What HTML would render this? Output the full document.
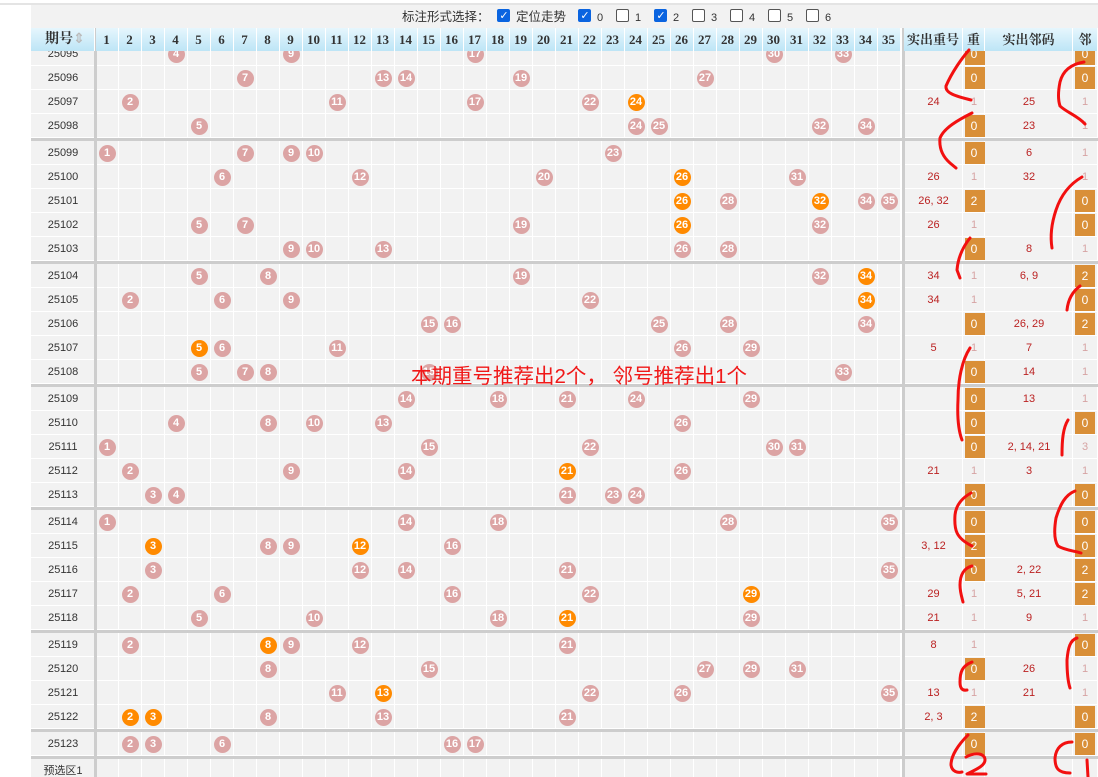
<!DOCTYPE html>
<html><head><meta charset="utf-8">
<style>
html,body{margin:0;padding:0;width:1098px;height:777px;overflow:hidden;background:#fff;font-family:"Liberation Sans","Noto Sans CJK SC",sans-serif;}
#w{position:absolute;left:0;top:0;width:1098px;height:777px;overflow:hidden}
.a{position:absolute;box-sizing:border-box}
.c{background:#f2f2f2;border-right:1px solid #fff;border-bottom:1px solid #fff}
.h{background:linear-gradient(#e6f6fd,#bde5f6);border-right:1px solid #fff;font:bold 13px "Liberation Serif","Noto Serif CJK SC",serif;color:#333;text-align:center;line-height:23px}
.b{width:17px;height:17px;border-radius:50%;background:#dca4a4;color:#fff;font:bold 11px "Liberation Sans",sans-serif;text-align:center;line-height:17px}
.b.o{background:#ff8a00}
.t{font:11px "Liberation Sans","Noto Sans CJK SC",sans-serif;text-align:center;line-height:24px}
.p{color:#333;font-size:12px}
.r{color:#b22}
.g{color:#d6a3a3}
.ob{background:#d98f38;color:#fff}
.cb{width:13px;height:13px;border-radius:2px}
.cb.on{background:#0a64e0}
.cb.off{border:1px solid #555;background:#fff}
</style></head><body><div id="w"></div>
<script>
var W=document.getElementById('w');
function d(cls,x,y,w,h,txt,st){var e=document.createElement('div');e.className='a '+cls;e.style.left=x+'px';e.style.top=y+'px';if(w!=null)e.style.width=w+'px';if(h!=null)e.style.height=h+'px';if(txt!=null)e.textContent=txt;if(st)e.style.cssText+=st;W.appendChild(e);return e;}
d('',0,3,1098,2,null,'background:#e4e4e4');
d('',31,5,1067,23,null,'background:#f2f2f2');
d('',402,9,90,16,'标注形式选择：','font-size:12.5px;color:#333;line-height:16px');
var cbx=[[497,1,'定位走势'],[578,1,'0'],[616,0,'1'],[654,1,'2'],[692,0,'3'],[730,0,'4'],[768,0,'5'],[806,0,'6']];
cbx.forEach(function(c){d('cb '+(c[1]?'on':'off'),c[0],9,13,13);var t=d('',c[0]+19,9,70,16,c[2],'font-size:'+(c[2].length>1?'12.5':'11')+'px;color:#333;line-height:18px');if(c[2].length>1)t.style.lineHeight='16px';});
cbx.forEach(function(c){if(c[1])d('',c[0]+2,9,10,13,'✓','color:#fff;font:bold 11px "DejaVu Sans",sans-serif;line-height:13px;text-align:center');});
var rows=[
['25095',54,[4,9,17,30,33],[],'',['0',1],'',['0',1]],
['25096',78,[7,13,14,19,27],[],'',['0',1],'',['0',1]],
['25097',102,[2,11,17,22,24],[24],'24',['1',0],'25',['1',0]],
['25098',126,[5,24,25,32,34],[],'',['0',1],'23',['1',0]],
['25099',153,[1,7,9,10,23],[],'',['0',1],'6',['1',0]],
['25100',177,[6,12,20,26,31],[26],'26',['1',0],'32',['1',0]],
['25101',201,[26,28,32,34,35],[26,32],'26,32',['2',1],'',['0',1]],
['25102',225,[5,7,19,26,32],[26],'26',['1',0],'',['0',1]],
['25103',249,[9,10,13,26,28],[],'',['0',1],'8',['1',0]],
['25104',276,[5,8,19,32,34],[34],'34',['1',0],'6,9',['2',1]],
['25105',300,[2,6,9,22,34],[34],'34',['1',0],'',['0',1]],
['25106',324,[15,16,25,28,34],[],'',['0',1],'26,29',['2',1]],
['25107',348,[5,6,11,26,29],[5],'5',['1',0],'7',['1',0]],
['25108',372,[5,7,8,15,33],[],'',['0',1],'14',['1',0]],
['25109',399,[14,18,21,24,29],[],'',['0',1],'13',['1',0]],
['25110',423,[4,8,10,13,26],[],'',['0',1],'',['0',1]],
['25111',447,[1,15,22,30,31],[],'',['0',1],'2,14,21',['3',0]],
['25112',471,[2,9,14,21,26],[21],'21',['1',0],'3',['1',0]],
['25113',495,[3,4,21,23,24],[],'',['0',1],'',['0',1]],
['25114',522,[1,14,18,28,35],[],'',['0',1],'',['0',1]],
['25115',546,[3,8,9,12,16],[3,12],'3,12',['2',1],'',['0',1]],
['25116',570,[3,12,14,21,35],[],'',['0',1],'2,22',['2',1]],
['25117',594,[2,6,16,22,29],[29],'29',['1',0],'5,21',['2',1]],
['25118',618,[5,10,18,21,29],[21],'21',['1',0],'9',['1',0]],
['25119',645,[2,8,9,12,21],[8],'8',['1',0],'',['0',1]],
['25120',669,[8,15,27,29,31],[],'',['0',1],'26',['1',0]],
['25121',693,[11,13,22,26,35],[13],'13',['1',0],'21',['1',0]],
['25122',717,[2,3,8,13,21],[2,3],'2,3',['2',1],'',['0',1]],
['25123',744,[2,3,6,16,17],[],'',['0',1],'',['0',1]],
['预选区1',771,[],[],'',null,'',null]
];
function cx(i){return 107+23*(i-1);}
var prev=null;
rows.forEach(function(r){
  var y=r[1]-12;
  d('c',31,y,64,24);
  for(var i=1;i<=35;i++)d('c',cx(i)-11.5,y,23,24);
  d('c',904,y,59,24);d('c',963,y,22,24);d('c',985,y,88,24);d('c',1073,y,25,24);
  d('t p',31,y,64,24,r[0],'font-size:'+(r[0].length>5?'12':'11')+'px');
  r[2].forEach(function(n){d('b'+(r[3].indexOf(n)>=0?' o':''),cx(n)-8.5,r[1]-8.5,17,17,String(n));});
  if(r[4])d('t r',904,y,59,24,r[4].replace(/,/g,', '));
  if(r[5]){ if(r[5][1])d('ob',965,y+1,20,22,null);d('t '+(r[5][1]?'':'g'),963,y,22,24,r[5][0],r[5][1]?'color:#fff;font-size:12px':'');}
  if(r[6])d('t r',985,y,88,24,r[6].replace(/,/g,', '));
  if(r[7]){ if(r[7][1])d('ob',1075,y+1,20,22,null);d('t '+(r[7][1]?'':'g'),1073,y,24,24,r[7][0],r[7][1]?'color:#fff;font-size:12px':'');}
  if(prev!==null && r[1]-prev>24){d('',31,prev+12,1067,3,null,'background:#cdcdcd');}
  prev=r[1];
});
d('',94,28,3,749,null,'background:#cdcdcd');
d('',902,28,3,749,null,'background:#cdcdcd');
d('h',31,28,64,23,'期号','font-size:14px;text-align:left;padding-left:14px');
d('',73,31,10,17,'⇕','color:#bbb;font:bold 14px "DejaVu Sans";line-height:17px');
for(var i=1;i<=35;i++)d('h',cx(i)-11.5,28,23,23,String(i));
d('h',904,28,59,23,'实出重号');d('h',963,28,22,23,'重');d('h',985,28,88,23,'实出邻码');d('h',1073,28,25,23,'邻');
d('',411,363,370,28,'本期重号推荐出2个， 邻号推荐出1个','color:#f01818;font-size:20.5px;line-height:28px;white-space:nowrap');
</script>
<svg class="a" style="position:absolute;left:0;top:0" width="1098" height="777" viewBox="0 0 1098 777" fill="none" stroke="#f21010" stroke-width="3" stroke-linecap="round" stroke-linejoin="round">
<path d="M969,50 C962,58 952,72 946,86 C945,93 955,96 971,100"/>
<path d="M972,113 C958,120 944,128 940,138 C939,148 942,156 950,163 L956,168"/>
<path d="M970,238 C962,248 958,258 957,270 L960,278"/>
<path d="M970,348 C962,360 958,380 958,400 C957,420 959,432 962,440"/>
<path d="M971,493 C962,498 956,505 955,515 C954,530 956,538 972,546"/>
<path d="M972,566 C964,568 960,575 960,585 C960,592 962,598 963,602"/>
<path d="M972,662 C962,666 960,672 960,682 C960,688 962,691 967,690"/>
<path d="M968,735 C958,745 951,756 951,765 C952,772 958,773 962,772"/>
<path d="M966,757 C975,752 985,753 985,760 C985,766 975,770 967,774 L986,774"/>
<path d="M1084,62 C1072,64 1063,70 1060,82 C1058,92 1058,100 1060,106 C1066,112 1078,116 1085,124"/>
<path d="M1082,177 C1068,185 1060,198 1056,210 C1052,222 1050,236 1052,248"/>
<path d="M1080,286 C1072,292 1068,300 1067,310"/>
<path d="M1068,420 C1063,428 1062,440 1062,455"/>
<path d="M1075,491 C1065,495 1060,505 1056,518 C1054,530 1054,540 1058,546 C1064,550 1075,551 1081,553"/>
<path d="M1077,638 C1070,640 1068,648 1067,660 C1067,672 1068,682 1070,688"/>
<path d="M1072,742 C1062,742 1056,748 1055,758 C1055,768 1058,773 1070,773"/>
<path d="M1087,760 L1088,777"/>
</svg>
</body></html>
